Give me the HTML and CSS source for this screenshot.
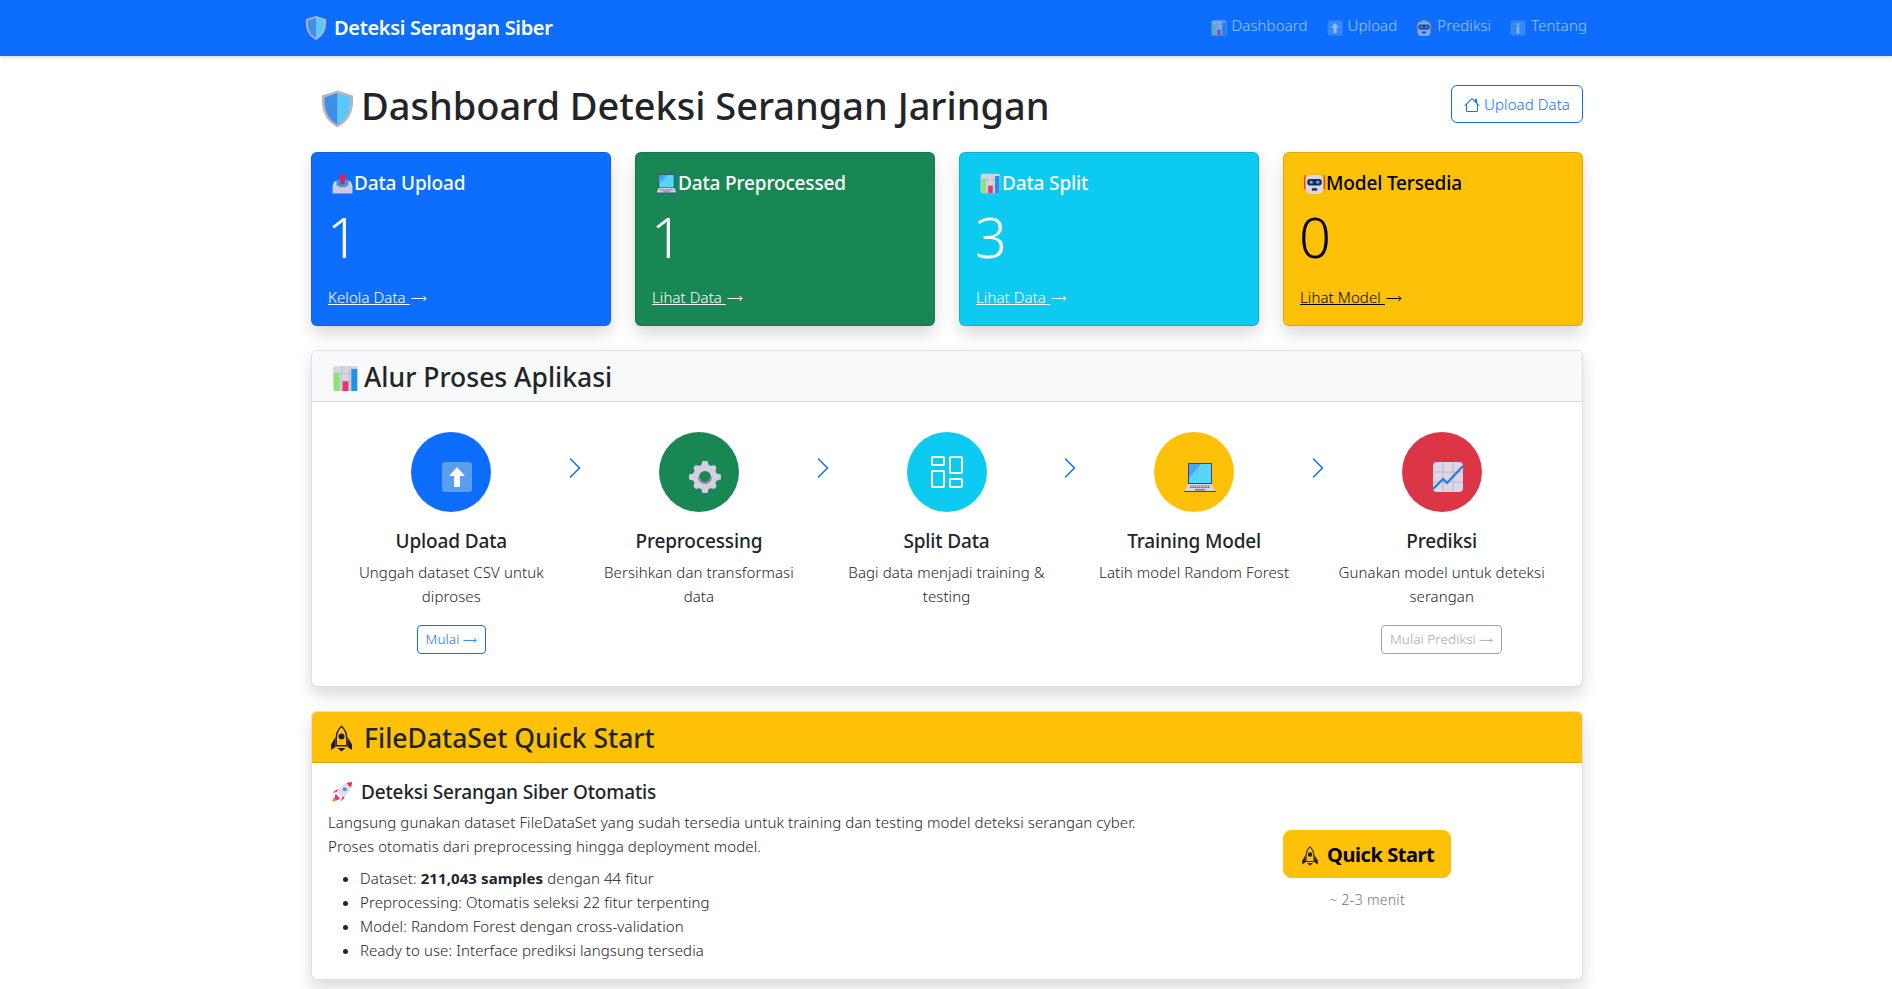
FILE: index.html
```html
<!DOCTYPE html>
<html lang="id">
<head>
<meta charset="utf-8">
<title>Deteksi Serangan Siber</title>
<link rel="stylesheet" href="styles.css">
</head>
<body>
<svg class="defs" width="0" height="0" aria-hidden="true">
  <defs>
    <symbol id="e-shield" viewBox="0 0 32 36">
      <path d="M16 0 L31 5 C32 18 29 29 16 36 C3 29 0 18 1 5 Z" fill="#bdb4ba"/>
      <path d="M16 2.500 L3.500 6.800 C3 18 6 27.500 16 33.500 Z" fill="#3f8eea"/>
      <path d="M16 2.500 L28.500 6.800 C29 18 26 27.500 16 33.500 Z" fill="#5ac8fd"/>
    </symbol>
    <symbol id="e-chart" viewBox="0 0 28 28">
      <rect x="1" y="1" width="26" height="26" rx="3" fill="#d9d4e2"/>
      <path d="M1 9h26M1 17h26M10 1v26M18 1v26" stroke="#bdb7c8" stroke-width=".8"/>
      <rect x="2" y="8" width="6" height="19" fill="#8ee07a"/>
      <rect x="11" y="17" width="6" height="10" fill="#e9346f"/>
      <rect x="20" y="4" width="6" height="23" fill="#1b94e8"/>
    </symbol>
    <symbol id="e-up" viewBox="0 0 32 32">
      <rect x="1" y="1" width="30" height="30" rx="3" fill="#5a9ef0"/>
      <path d="M16 6 L24 15 H19 V26 H13 V15 H8 Z" fill="#fff"/>
    </symbol>
    <symbol id="e-info" viewBox="0 0 32 32">
      <rect x="1" y="1" width="30" height="30" rx="3" fill="#5a9ef0"/>
      <rect x="13.500" y="6" width="5" height="5" rx="2.400" fill="#e8f4ff"/>
      <rect x="13.500" y="13" width="5" height="14" fill="#e8f4ff"/>
    </symbol>
    <symbol id="e-robot" viewBox="0 0 32 32">
      <path d="M1 3v22M31 3v22" stroke="#ef3340" stroke-width="2"/>
      <rect x="11" y="0" width="10" height="3" fill="#e2b93b"/>
      <rect x="3" y="3" width="26" height="29" rx="8" fill="#dcd6ec"/>
      <rect x="5" y="9" width="22" height="10" rx="4" fill="#1d2a50"/>
      <circle cx="11" cy="14" r="2.500" fill="#4fb0ff"/>
      <circle cx="21" cy="14" r="2.500" fill="#4fb0ff"/>
      <rect x="12" y="23" width="8" height="4" fill="#2a3560"/>
    </symbol>
    <symbol id="e-tray" viewBox="0 0 28 28">
      <path d="M3 11h22l2 6v10H1V17z" fill="#d9d3ea"/>
      <rect x="6" y="9" width="16" height="10" fill="#3f95dc"/>
      <path d="M1 17h8l1 3h8l1-3h8v10H1z" fill="#cfc9e0"/>
      <path d="M14 0 L20 7 H17 V15 H11 V7 H8 Z" fill="#e21f4f"/>
    </symbol>
    <symbol id="e-laptop" viewBox="0 0 32 32">
      <rect x="4" y="2" width="24" height="21" fill="#3a3f96"/>
      <rect x="5" y="3" width="22" height="19" fill="#57d6fb"/>
      <path d="M5 3h12L5 17z" fill="#46a6f5"/>
      <path d="M4 23h24l3 7H1z" fill="#d8d4e4"/>
      <path d="M6 25h20M6 26.500h20" stroke="#64607e" stroke-width="1" stroke-dasharray="1.500 .7"/>
      <rect x="11" y="28" width="10" height="1.500" fill="#7d7a92"/>
      <rect x="0" y="30" width="32" height="1" fill="#3a3f96"/>
    </symbol>
    <symbol id="e-gear" viewBox="0 0 32 32">
      <path fill="#d4cfe0" fill-rule="evenodd" d="M13 2a3 3 0 0 1 6 0c.3 2 2 3.500 4 2.500a3 3 0 0 1 4 4c-1 2 0 4 2.500 4.500a3 3 0 0 1 0 6c-2.500.5-3.500 2.500-2.500 4.500a3 3 0 0 1-4 4c-2-1-3.700.5-4 2.500a3 3 0 0 1-6 0c-.3-2-2-3.500-4-2.500a3 3 0 0 1-4-4c1-2 0-4-2.500-4.500a3 3 0 0 1 0-6c2.500-.5 3.500-2.500 2.500-4.500a3 3 0 0 1 4-4c2 1 3.700-.5 4-2.500zM16 10a6 6 0 1 0 0 12 6 6 0 0 0 0-12z"/>
      <path d="M10 16a6 6 0 0 0 12 0" fill="none" stroke="#8f8aa0" stroke-width="2"/>
    </symbol>
    <symbol id="e-trend" viewBox="0 0 32 32">
      <rect x="1" y="1" width="30" height="30" rx="4" fill="#dcd6e6"/>
      <path d="M1 11h30M1 21h30M11 1v30M21 1v30" stroke="#bdb6c6" stroke-width="1"/>
      <path d="M1 28 L11 18 L15 22 L31 5" fill="none" stroke="#1c7fe0" stroke-width="2.200"/>
    </symbol>
    <symbol id="e-rocket" viewBox="0 0 24 24">
      <path d="M22 1 C15 2 9 6 6 12 L12 18 C18 15 22 9 23 2 Z" fill="#e6dfea"/>
      <path d="M22 1 C20 1.300 18.500 1.800 17 2.500 L21.500 7 C22.200 5.500 22.800 3.800 23 2 Z" fill="#ef2d43"/>
      <circle cx="15" cy="9" r="2.300" fill="#3c9cf0"/>
      <path d="M6 12 L2 13 L5 10 L8 9 Z M12 18 L11 22 L14 19 L15 16 Z" fill="#e9346f"/>
      <path d="M5 14 L10 19 L7 21 L3 21 Z" fill="#e9346f"/>
      <path d="M3 18 L6 21 L1 23 Z" fill="#f58a2e"/>
    </symbol>
    <symbol id="b-arrow" viewBox="0 0 16 16">
      <path d="M.5 8.500H15M12.500 6 15 8.500 12.500 11" fill="none" stroke="currentColor" stroke-width="1"/>
    </symbol>
    <symbol id="b-chevron" viewBox="0 0 16 16">
      <path fill-rule="evenodd" d="M4.646 1.646a.5.5 0 0 1 .708 0l6 6a.5.5 0 0 1 0 .708l-6 6a.5.5 0 0 1-.708-.708L10.293 8 4.646 2.354a.5.5 0 0 1 0-.708z"/>
    </symbol>
    <symbol id="b-house" viewBox="0 0 16 16">
      <path d="M8.707 1.500a1 1 0 0 0-1.414 0L.646 8.146a.5.5 0 0 0 .708.708L2 8.207V13.500A1.500 1.500 0 0 0 3.500 15h9a1.500 1.500 0 0 0 1.500-1.500V8.207l.646.647a.5.5 0 0 0 .708-.708L13 5.793V2.500a.5.5 0 0 0-.5-.5h-1a.5.5 0 0 0-.5.5v1.293L8.707 1.500ZM13 7.207V13.500a.5.5 0 0 1-.5.5h-9a.5.5 0 0 1-.5-.5V7.207l5-5 5 5Z"/>
    </symbol>
    <symbol id="b-split" viewBox="0 0 16 16">
      <path fill-rule="evenodd" d="M1 0h5a1 1 0 0 1 1 1v3a1 1 0 0 1-1 1H1a1 1 0 0 1-1-1V1a1 1 0 0 1 1-1zm0 1v3h5V1H1zm9-1h5a1 1 0 0 1 1 1v7a1 1 0 0 1-1 1h-5a1 1 0 0 1-1-1V1a1 1 0 0 1 1-1zm0 1v7h5V1h-5zM1 7h5a1 1 0 0 1 1 1v7a1 1 0 0 1-1 1H1a1 1 0 0 1-1-1V8a1 1 0 0 1 1-1zm0 1v7h5V8H1zm9 3h5a1 1 0 0 1 1 1v3a1 1 0 0 1-1 1h-5a1 1 0 0 1-1-1v-3a1 1 0 0 1 1-1zm0 1v3h5v-3h-5z"/>
    </symbol>
    <symbol id="b-rocket" viewBox="0 0 21 27">
      <path d="M10.500 1.200C6.800 4.500 5.200 9 5.200 14v6.800h10.600V14c0-5-1.600-9.500-5.300-12.800z" fill="none" stroke="currentColor" stroke-width="1.400"/>
      <circle cx="10.500" cy="11.500" r="3" fill="currentColor"/>
      <path d="M4.500 12 L0 19.500 V25 L4.500 22zM16.500 12 L21 19.500 V25 L16.500 22zM6.500 23H14.500L10.500 26.500z" fill="currentColor"/>
    </symbol>
  </defs>
</svg>

<nav class="navbar">
  <div class="navbar-inner">
    <a class="brand" href="#"><svg class="emoji brand-emoji"><use href="#e-shield"/></svg>Deteksi Serangan Siber</a>
    <ul class="nav-links">
      <li><a href="#"><svg class="emoji nav-emoji"><use href="#e-chart"/></svg>Dashboard</a></li>
      <li><a href="#"><svg class="emoji nav-emoji"><use href="#e-up"/></svg>Upload</a></li>
      <li><a href="#"><svg class="emoji nav-emoji"><use href="#e-robot"/></svg>Prediksi</a></li>
      <li><a href="#"><svg class="emoji nav-emoji"><use href="#e-info"/></svg>Tentang</a></li>
    </ul>
  </div>
</nav>

<main class="container">
  <header class="page-head">
    <h1><svg class="emoji h1-emoji"><use href="#e-shield"/></svg>Dashboard Deteksi Serangan Jaringan</h1>
    <a class="btn btn-outline-primary" href="#"><svg class="bi"><use href="#b-house"/></svg>Upload Data</a>
  </header>

  <section class="stats">
    <article class="stat stat-primary">
      <h5><svg class="emoji"><use href="#e-tray"/></svg>Data Upload</h5>
      <p class="num">1</p>
      <a href="#"><span class="u">Kelola Data </span><svg class="bi"><use href="#b-arrow"/></svg></a>
    </article>
    <article class="stat stat-success">
      <h5><svg class="emoji"><use href="#e-laptop"/></svg>Data Preprocessed</h5>
      <p class="num">1</p>
      <a href="#"><span class="u">Lihat Data </span><svg class="bi"><use href="#b-arrow"/></svg></a>
    </article>
    <article class="stat stat-info">
      <h5><svg class="emoji"><use href="#e-chart"/></svg>Data Split</h5>
      <p class="num">3</p>
      <a href="#"><span class="u">Lihat Data </span><svg class="bi"><use href="#b-arrow"/></svg></a>
    </article>
    <article class="stat stat-warning">
      <h5><svg class="emoji"><use href="#e-robot"/></svg>Model Tersedia</h5>
      <p class="num">0</p>
      <a href="#"><span class="u">Lihat Model </span><svg class="bi"><use href="#b-arrow"/></svg></a>
    </article>
  </section>

  <section class="card">
    <div class="card-header">
      <h4><svg class="emoji h4-emoji"><use href="#e-chart"/></svg>Alur Proses Aplikasi</h4>
    </div>
    <div class="flow">
      <div class="step">
        <div class="circle bg-primary"><svg class="emoji step-emoji"><use href="#e-up"/></svg></div>
        <h5>Upload Data</h5>
        <p>Unggah dataset CSV untuk<br>diproses</p>
        <a class="btn btn-sm btn-outline-primary" href="#">Mulai <svg class="bi"><use href="#b-arrow"/></svg></a>
      </div>
      <svg class="chevron"><use href="#b-chevron"/></svg>
      <div class="step">
        <div class="circle bg-success"><svg class="emoji step-emoji"><use href="#e-gear"/></svg></div>
        <h5>Preprocessing</h5>
        <p>Bersihkan dan transformasi<br>data</p>
      </div>
      <svg class="chevron"><use href="#b-chevron"/></svg>
      <div class="step">
        <div class="circle bg-info"><svg class="split-icon"><use href="#b-split"/></svg></div>
        <h5>Split Data</h5>
        <p>Bagi data menjadi training &amp;<br>testing</p>
      </div>
      <svg class="chevron"><use href="#b-chevron"/></svg>
      <div class="step">
        <div class="circle bg-warning"><svg class="emoji step-emoji"><use href="#e-laptop"/></svg></div>
        <h5>Training Model</h5>
        <p>Latih model Random Forest</p>
      </div>
      <svg class="chevron"><use href="#b-chevron"/></svg>
      <div class="step">
        <div class="circle bg-danger"><svg class="emoji step-emoji"><use href="#e-trend"/></svg></div>
        <h5>Prediksi</h5>
        <p>Gunakan model untuk deteksi<br>serangan</p>
        <a class="btn btn-sm btn-disabled" href="#">Mulai Prediksi <svg class="bi"><use href="#b-arrow"/></svg></a>
      </div>
    </div>
  </section>

  <section class="card quick">
    <div class="card-header header-warning">
      <h4><svg class="rocket-head"><use href="#b-rocket"/></svg>FileDataSet Quick Start</h4>
    </div>
    <div class="quick-body">
      <div class="quick-text">
        <h5><svg class="emoji rocket-emoji"><use href="#e-rocket"/></svg>Deteksi Serangan Siber Otomatis</h5>
        <p>Langsung gunakan dataset FileDataSet yang sudah tersedia untuk training dan testing model deteksi serangan cyber.<br>Proses otomatis dari preprocessing hingga deployment model.</p>
        <ul>
          <li>Dataset: <strong>211,043 samples</strong> dengan 44 fitur</li>
          <li>Preprocessing: Otomatis seleksi 22 fitur terpenting</li>
          <li>Model: Random Forest dengan cross-validation</li>
          <li>Ready to use: Interface prediksi langsung tersedia</li>
        </ul>
      </div>
      <div class="quick-cta">
        <a class="btn btn-lg btn-warning" href="#"><svg class="bi rocket-btn"><use href="#b-rocket"/></svg>Quick Start</a>
        <small>~ 2-3 menit</small>
      </div>
    </div>
  </section>
</main>
</body>
</html>
```

FILE: styles.css
```css
* { box-sizing: border-box; }
html, body { height: 989px; overflow: hidden; }
body {
  margin: 0;
  font-family: "Noto Sans", "Liberation Sans", sans-serif;
  font-size: 15px;
  font-weight: 350;
  line-height: 24px;
  color: #212529;
  background: #fff;
  letter-spacing: 0.09px;
}
.defs { position: absolute; }
h1, h4, h5, p, ul { margin: 0; }
a { color: inherit; text-decoration: none; }
svg { flex: none; }
.emoji { width: 20px; height: 20px; vertical-align: -3px; margin-right: 2px; }
.bi { width: 16px; height: 16px; fill: currentColor; vertical-align: -3px; }

.navbar {
  height: 56px;
  background: #0d6efd;
  box-shadow: 0 2px 4px rgba(0, 0, 0, .12);
  position: relative;
}
.navbar-inner {
  width: 1284px;
  height: 100%;
  margin: 0 auto;
  display: flex;
  align-items: center;
  justify-content: space-between;
}
.brand { color: #fff; font-size: 20px; font-weight: 600; display: flex; align-items: center; letter-spacing: -0.33px; margin-left: 1px; }
.brand-emoji { width: 22px; height: 24px; margin-right: 7px; }
.nav-links { list-style: none; padding: 0; display: flex; gap: 19px; margin: 0 1px 7px 0; }
.nav-links a { color: rgba(255, 255, 255, .6); display: flex; align-items: center; }
.nav-emoji { width: 16px; height: 16px; margin-right: 5px; opacity: .55; margin-top: 6px; }

.container { width: 1272px; margin: 0 0 0 311px; }
.page-head { display: flex; align-items: center; justify-content: space-between; padding-top: 25px; height: 96px; padding-bottom: 23px; }
h1 { font-size: 38px; font-weight: 500; line-height: 48px; display: flex; align-items: center; padding-left: 10px; letter-spacing: -0.03px; }
.h1-emoji { width: 33px; height: 40px; margin-right: 7px; margin-top: 8px; }
.btn {
  display: inline-block;
  border: 1px solid transparent;
  border-radius: 6px;
  padding: 6px 12px;
  font-size: 15px;
  text-align: center;
}
.btn-outline-primary { color: #0d6efd; border-color: #0d6efd; }
.page-head .btn { margin-bottom: 2px; }
.page-head .bi { margin-right: 4px; }
.btn-sm { font-size: 13.5px; line-height: 21px; padding: 3px 8px; border-radius: 4px; }
.btn-sm .bi { width: 14px; height: 14px; }
.btn-disabled { color: #6c757d; border-color: #6c757d; opacity: .65; }
.btn-lg { font-size: 20px; line-height: 30px; padding: 9px 16px 7px; border-radius: 8px; }
.btn-warning { background: #ffc107; border-color: #ffc107; color: #000; font-weight: 700; letter-spacing: -0.45px; }
.rocket-btn { width: 16px; height: 20px; margin: 0 9px 0 2px; vertical-align: -4px; color: #1c1f3a; }

.stats { display: grid; grid-template-columns: repeat(4, 1fr); gap: 24px; }
.stat {
  height: 174px;
  border: 1px solid rgba(0, 0, 0, .125);
  border-radius: 6px;
  padding: 18px 16px 16px;
  color: #fff;
  box-shadow: 0 8px 16px rgba(0, 0, 0, .15);
}
.stat h5 { font-size: 19px; font-weight: 500; line-height: 24px; margin-bottom: 8px; padding-left: 4px; letter-spacing: -0.15px; }
.stat h5 .emoji { width: 21px; height: 21px; vertical-align: -4px; margin-right: 1px; }
.stat .num { font-size: 56px; font-weight: 300; line-height: 67px; margin: 0 0 15px -1px; letter-spacing: 0; }
.stat a { display: block; line-height: 24px; }
.stat .u { text-decoration: underline; white-space: pre; }
.stat .bi { margin-left: 1px; }
.stat-primary { background-color: #0d6efd; }
.stat-success { background-color: #198754; }
.stat-info { background-color: #0dcaf0; }
.stat-warning { background-color: #ffc107; color: #000; }

.card {
  margin-top: 24px;
  border: 1px solid rgba(0, 0, 0, .125);
  border-radius: 6px;
  box-shadow: 0 8px 16px rgba(0, 0, 0, .15);
  background: #fff;
  overflow: hidden;
}
.card-header {
  height: 51px;
  padding: 1px 16px 0;
  display: flex;
  align-items: center;
  background: #f8f9fa;
  border-bottom: 1px solid rgba(0, 0, 0, .125);
}
h4 { font-size: 26.5px; font-weight: 500; line-height: 30px; display: flex; align-items: center; letter-spacing: 0; }
.h4-emoji { width: 27px; height: 27px; margin: 3px 5px 0 4px; }
.header-warning { background: #ffc107; }
.rocket-head { width: 21px; height: 27px; margin: 2px 12px 0 3px; color: #1c1f3a; }

.flow { display: flex; justify-content: center; padding: 30px 17px 0 16px; height: 284px; }
.step { width: 207.6px; text-align: center; display: flex; flex-direction: column; align-items: center; }
.circle { width: 80px; height: 80px; border-radius: 50%; display: flex; align-items: center; justify-content: center; }
.step-emoji { width: 32px; height: 32px; margin: 10px 0 0 12px; }
.split-icon { width: 32px; height: 32px; fill: #fff; }
.bg-primary { background: #0d6efd; }
.bg-success { background: #198754; }
.bg-info { background: #0dcaf0; }
.bg-warning { background: #ffc107; }
.bg-danger { background: #dc3545; }
.step h5 { font-size: 19px; font-weight: 500; line-height: 24px; margin-top: 17px; margin-bottom: 7px; letter-spacing: -0.15px; }
.step p { line-height: 24px; margin-bottom: 17px; }
.chevron { width: 24px; height: 24px; margin: 24px 8px 0; fill: #0d6efd; flex: none; }

.quick { margin-top: 24px; }
.quick-body { display: grid; grid-template-columns: 2fr 1fr; padding: 17px 16px 16px; height: 216px; }
.quick-text h5 { font-size: 19px; font-weight: 500; line-height: 24px; margin-bottom: 6px; display: flex; align-items: center; padding-left: 3px; letter-spacing: -0.15px; }
.rocket-emoji { width: 22px; height: 22px; margin-right: 8px; }
.quick-text p { margin-bottom: 8px; }
.quick-text ul { padding-left: 32px; }
.quick-cta { display: flex; flex-direction: column; align-items: center; padding: 50px 0 0 15px; gap: 10px; }
.quick-cta small { font-size: 14px; color: #6c757d; letter-spacing: .3px; }
```
